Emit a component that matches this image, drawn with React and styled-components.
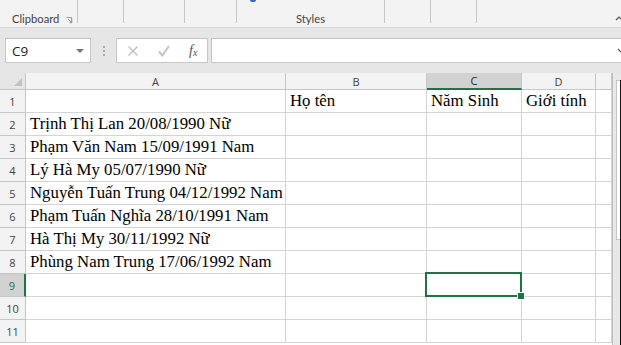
import React from 'react';
import styled, { createGlobalStyle, css } from 'styled-components';

/**
 * Excel sheet: ribbon strip, formula bar, grid with data in column A
 */

const COLS = [
  { key: 'A', width: 260 },
  { key: 'B', width: 141 },
  { key: 'C', width: 95 },
  { key: 'D', width: 74 },
  { key: 'E', width: 16 },
];

const ROWS = [
  { A: '', B: 'Họ tên', C: 'Năm Sinh', D: 'Giới tính' },
  { A: 'Trịnh Thị Lan 20/08/1990 Nữ' },
  { A: 'Phạm Văn Nam 15/09/1991 Nam' },
  { A: 'Lý Hà My 05/07/1990 Nữ' },
  { A: 'Nguyễn Tuấn Trung 04/12/1992 Nam' },
  { A: 'Phạm Tuấn Nghĩa 28/10/1991  Nam' },
  { A: 'Hà Thị My 30/11/1992 Nữ' },
  { A: 'Phùng Nam Trung 17/06/1992 Nam' },
  {},
  {},
  {},
];

const GROUPS = [
  { width: 78, label: 'Clipboard', launcher: true },
  { width: 46 },
  { width: 61 },
  { width: 52 },
  { width: 148, label: 'Styles' },
  { width: 46 },
  { width: 46 },
];

const SELECTED = { col: 'C', row: 9 };

const App = () => {
  return (
    <>
      <GlobalStyle />
      <Window>
        <Ribbon>
          {GROUPS.map((g, i) => (
            <RibbonGroup key={i} width={g.width} launcher={g.launcher}>
              {i === 4 && <BlueBit />}
              {g.label && <GroupLabel>{g.label}</GroupLabel>}
              {g.launcher && (
                <Launcher viewBox="0 0 8 8">
                  <path d="M0.5 0.5h6v6" fill="none" stroke="#8a8a8a" strokeWidth="1" />
                  <path d="M2.5 2.5l4 4M4 6.5h2.5V4" fill="none" stroke="#8a8a8a" strokeWidth="1" />
                </Launcher>
              )}
            </RibbonGroup>
          ))}
          <RibbonRest>
            <Caret viewBox="0 0 8 6">
              <path d="M1 5l3-3 3 3" fill="none" stroke="#555" strokeWidth="1.2" />
            </Caret>
          </RibbonRest>
        </Ribbon>

        <FormulaBar>
          <NameBox>
            <span>C9</span>
            <DropArrow />
          </NameBox>
          <Grip>
            <i /><i /><i />
          </Grip>
          <FxBox>
            <FxIcon viewBox="0 0 12 12">
              <path d="M1.5 1.5l9 9M10.5 1.5l-9 9" stroke="#bdbdbd" strokeWidth="1.3" />
            </FxIcon>
            <FxIcon viewBox="0 0 12 12">
              <path d="M1 6.5l3.3 4 6.7-9.5" fill="none" stroke="#c4c4c4" strokeWidth="2" />
            </FxIcon>
            <FxLabel>
              f<sub>x</sub>
            </FxLabel>
          </FxBox>
          <FormulaInput>
            <Chevron viewBox="0 0 8 6">
              <path d="M1 1l3 3 3-3" fill="none" stroke="#555" strokeWidth="1.2" />
            </Chevron>
          </FormulaInput>
        </FormulaBar>

        <Sheet>
          <Grid>
            <Corner>
              <CornerMark />
            </Corner>
            {COLS.map((c) => (
              <ColHeader key={c.key} active={c.key === SELECTED.col}>
                {c.key !== 'E' && c.key}
              </ColHeader>
            ))}
            {ROWS.map((r, i) => (
              <React.Fragment key={i}>
                <RowHeader active={i + 1 === SELECTED.row}>{i + 1}</RowHeader>
                {COLS.map((c) => (
                  <Cell
                    key={c.key}
                    selected={c.key === SELECTED.col && i + 1 === SELECTED.row}
                  >
                    {r[c.key]}
                  </Cell>
                ))}
              </React.Fragment>
            ))}
          </Grid>
          <Scrollbar>
            <Track>
              <Thumb />
            </Track>
            <Edge />
          </Scrollbar>
        </Sheet>
      </Window>
    </>
  );
};

export default App;

/**
 * Styled Components
 */

const GlobalStyle = createGlobalStyle`
  html, body {
    margin: 0;
    padding: 0;
    overflow: hidden;
    background: #fff;
  }
  * {
    box-sizing: border-box;
  }
`;

const Window = styled.div`
  width: 621px;
  height: 345px;
  overflow: hidden;
  display: flex;
  flex-direction: column;
  font-family: 'Open Sans', 'Noto Sans', sans-serif;
  color: #444;
`;

const Ribbon = styled.div`
  display: flex;
  height: 28px;
  flex-shrink: 0;
  background: #f3f3f3;
  border-bottom: 1px solid #d6d6d6;
`;

const RibbonGroup = styled.div`
  position: relative;
  width: ${(p) => p.width}px;
  height: 23px;
  border-right: 1px solid #c6c6c6;
  display: flex;
  align-items: flex-end;
  justify-content: ${(p) => (p.launcher ? 'flex-start' : 'center')};
  padding-left: ${(p) => (p.launcher ? '12px' : '0')};
  flex-shrink: 0;
`;

const GroupLabel = styled.span`
  font-family: 'Lato', 'Noto Sans', sans-serif;
  font-size: 11.2px;
  line-height: 14px;
  margin-bottom: -3px;
  color: #444;
`;

const Launcher = styled.svg`
  position: absolute;
  right: 4px;
  bottom: -1px;
  width: 7px;
  height: 7px;
`;

const BlueBit = styled.span`
  position: absolute;
  left: 13px;
  top: 0;
  width: 6px;
  height: 2px;
  background: #3a66c4;
  border-radius: 0 0 2px 2px;
`;

const RibbonRest = styled.div`
  flex: 1;
  display: flex;
  justify-content: flex-end;
  align-items: flex-end;
  padding-bottom: 6px;
`;

const Caret = styled.svg`
  width: 8px;
  height: 6px;
  margin-right: -2px;
`;

const FormulaBar = styled.div`
  display: flex;
  align-items: stretch;
  height: 45px;
  flex-shrink: 0;
  padding: 10px 0 10px 5px;
  background: #e6e6e6;
`;

const boxBase = css`
  background: #fff;
  border: 1px solid #c6c6c6;
  height: 25px;
`;

const NameBox = styled.div`
  ${boxBase};
  width: 86px;
  display: flex;
  align-items: center;
  justify-content: space-between;
  padding: 0 6px 0 6px;
  font-size: 13.5px;
  color: #222;
`;

const DropArrow = styled.span`
  width: 0;
  height: 0;
  border-left: 4px solid transparent;
  border-right: 4px solid transparent;
  border-top: 4px solid #777;
`;

const Grip = styled.div`
  width: 25px;
  display: flex;
  flex-direction: column;
  align-items: center;
  justify-content: center;
  gap: 2px;
  i {
    display: block;
    width: 2px;
    height: 2px;
    background: #a8a8a8;
  }
`;

const FxBox = styled.div`
  ${boxBase};
  width: 92px;
  display: flex;
  align-items: center;
  gap: 19px;
  padding: 0 0 0 10px;
  margin-right: 3px;
`;

const FxIcon = styled.svg`
  width: 12px;
  height: 12px;
`;

const FxLabel = styled.span`
  font-family: 'Liberation Serif', serif;
  font-style: italic;
  font-size: 14px;
  color: #555;
  sub {
    font-size: 10px;
    vertical-align: baseline;
    position: relative;
    top: 1px;
  }
`;

const FormulaInput = styled.div`
  ${boxBase};
  flex: 1;
  border-right: none;
  display: flex;
  align-items: center;
  justify-content: flex-end;
`;

const Chevron = styled.svg`
  width: 8px;
  height: 6px;
  margin-right: -4px;
`;

const Sheet = styled.div`
  flex: 1;
  display: flex;
  min-height: 0;
  background: #fff;
`;

const Grid = styled.div`
  display: grid;
  grid-template-columns: 26px ${COLS.map((c) => c.width + 'px').join(' ')};
  grid-auto-rows: 23px;
  grid-template-rows: 17px;
  align-content: start;
  width: 612px;
  overflow: hidden;
  background: #fff;
`;

const headerBase = css`
  display: flex;
  align-items: center;
  justify-content: center;
  font-size: 11px;
  color: #444;
  background: #f3f3f3;
  border-right: 1px solid #c6c6c6;
  border-bottom: 1px solid #c6c6c6;
`;

const Corner = styled.div`
  ${headerBase};
  position: relative;
  background: #e6e6e6;
`;

const CornerMark = styled.span`
  position: absolute;
  right: 3px;
  bottom: 3px;
  width: 0;
  height: 0;
  border-left: 8px solid transparent;
  border-bottom: 8px solid #c2c2c2;
`;

const ColHeader = styled.div`
  ${headerBase};
  ${(p) =>
    p.active &&
    css`
      background: #d2d2d2;
      border-bottom: 2px solid #217346;
      color: #262626;
    `}
`;

const RowHeader = styled.div`
  ${headerBase};
  ${(p) =>
    p.active &&
    css`
      background: #d2d2d2;
      border-right: 2px solid #217346;
      color: #217346;
    `}
`;

const Cell = styled.div`
  position: relative;
  border-right: 1px solid #d4d4d4;
  border-bottom: 1px solid #d4d4d4;
  padding: 0 0 1px 4px;
  display: flex;
  align-items: flex-end;
  white-space: nowrap;
  font-family: 'Liberation Serif', 'Times New Roman', serif;
  font-size: 16.8px;
  line-height: 20px;
  color: #000;
  ${(p) =>
    p.selected &&
    css`
      z-index: 2;
      overflow: visible;
      &::before {
        content: '';
        position: absolute;
        left: -2px;
        top: -2px;
        right: -1px;
        bottom: -1px;
        border: 2px solid #217346;
      }
      &::after {
        content: '';
        position: absolute;
        right: -4px;
        bottom: -4px;
        width: 6px;
        height: 6px;
        background: #217346;
        border: 1px solid #fff;
      }
    `}
`;

const Scrollbar = styled.div`
  width: 9px;
  display: flex;
  background: #e8e8e8;
  border-left: 1px solid #bdbdbd;
`;

const Track = styled.div`
  flex: 1;
  padding: 7px 0 0 3px;
`;

const Thumb = styled.div`
  width: 4px;
  height: 160px;
  background: #fff;
  border: 1px solid #c2c2c2;
  border-right: none;
`;

const Edge = styled.div`
  width: 2px;
  margin-top: 7px;
  background: #111;
`;
